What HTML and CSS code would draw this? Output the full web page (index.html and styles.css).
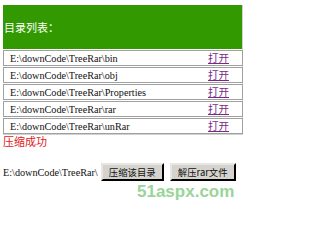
FILE: index.html
```html
<!DOCTYPE html>
<html>
<head>
<meta charset="utf-8">
<link rel="stylesheet" href="styles.css">
</head>
<body>
<div class="list">
  <div class="head">目录列表：</div>
  <div class="row"><span class="path">E:\downCode\TreeRar\bin</span><a class="open" href="#">打开</a></div>
  <div class="row"><span class="path">E:\downCode\TreeRar\obj</span><a class="open" href="#">打开</a></div>
  <div class="row"><span class="path">E:\downCode\TreeRar\Properties</span><a class="open" href="#">打开</a></div>
  <div class="row"><span class="path">E:\downCode\TreeRar\rar</span><a class="open" href="#">打开</a></div>
  <div class="row"><span class="path">E:\downCode\TreeRar\unRar</span><a class="open" href="#">打开</a></div>
</div>
<div class="msg">压缩成功</div>
<div class="actions">
  <span class="cur">E:\downCode\TreeRar\</span>
  <button class="btn b1">压缩该目录</button>
  <button class="btn b2">解压rar文件</button>
</div>
<div class="mark">51aspx.com</div>
</body>
</html>
```

FILE: styles.css
```css
html, body {
  margin: 0;
  background: #ffffff;
}
body {
  padding: 5px 0 0 3px;
  font-family: "Liberation Serif", "Noto Sans CJK SC", serif;
  font-size: 10.2px;
  color: #111;
  position: relative;
  width: 244px;
  height: 217px;
  overflow: hidden;
}
.list {
  width: 240px;
  border-right: 1px solid #d0d0d0;
  border-bottom: 1px solid #d0d0d0;
  box-sizing: border-box;
}
.head {
  background: #339900;
  color: #ffffff;
  height: 44px;
  display: flex;
  align-items: center;
  padding-left: 1px;
  font-family: "Noto Sans CJK SC", sans-serif;
  font-size: 11px;
}
.row {
  display: grid;
  grid-template-columns: 1fr 34px;
  align-items: center;
  height: 14px;
  width: 232px;
  border: 1px solid #a0a0a0;
  margin-top: 1px;
  padding-left: 6px;
}
.path {
  white-space: nowrap;
}
.open {
  color: #7a2a86;
  text-decoration: underline;
  font-family: "Noto Sans CJK SC", sans-serif;
  font-size: 10.5px;
  line-height: 14px;
}
.msg {
  color: #e02020;
  font-family: "Noto Sans CJK SC", sans-serif;
  font-size: 11px;
  line-height: 13px;
}
.actions {
  display: flex;
  align-items: center;
  margin-top: 15px;
}
.cur {
  white-space: nowrap;
  margin-right: 3px;
}
.btn {
  height: 18px;
  padding: 0;
  background: #d6d3ce;
  border: 2px outset #e8e6e2;
  border-right-color: #555;
  border-bottom-color: #555;
  font-family: "Noto Sans CJK SC", sans-serif;
  font-size: 9.4px;
  color: #111;
}
.b1 { width: 63px; margin-right: 6px; }
.b2 { width: 66px; }
.mark {
  position: absolute;
  left: 137px;
  top: 182px;
  font-family: "Liberation Sans", sans-serif;
  font-weight: bold;
  font-size: 17px;
  color: #8fd08f;
  opacity: 0.9;
}
```
